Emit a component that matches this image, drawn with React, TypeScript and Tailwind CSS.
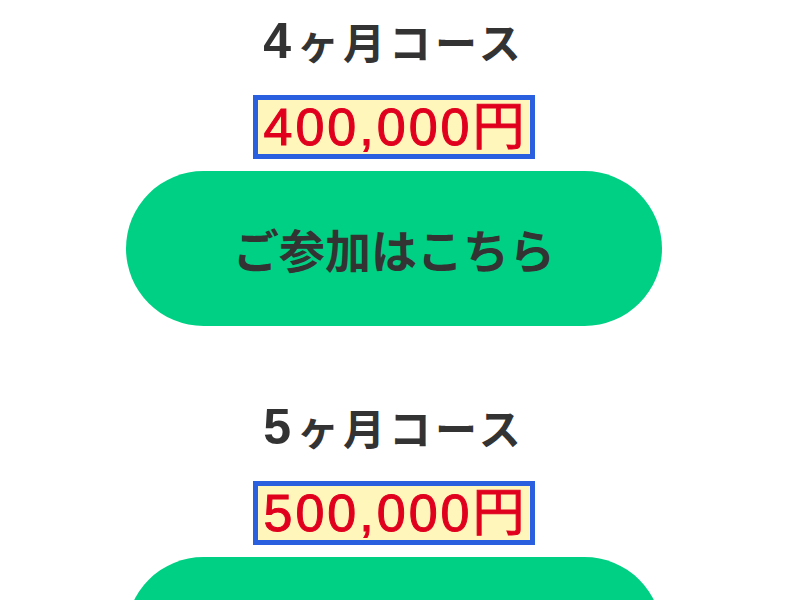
const jp = '"Noto Sans CJK JP", "Noto Sans", sans-serif';
const latin = '"Liberation Sans", "Noto Sans CJK JP", Arial, sans-serif';

type Course = { months: string; price: string };

const courses: Course[] = [
  { months: "4", price: "400,000円" },
  { months: "5", price: "500,000円" },
];

function CourseBlock({ course }: { course: Course }) {
  return (
    <section className="flex flex-col items-center">
      <h2 className="flex h-[60px] items-center text-[42px] leading-[60px] font-bold tracking-[4px] text-[#333333]">
        <span style={{ fontFamily: latin }} className="mr-[2px] text-[50px]">
          {course.months}
        </span>
        <span>ヶ月コース</span>
      </h2>
      <div className="mt-[24px] flex h-[64px] w-[282px] items-center justify-center border-[5px] border-[#2a5fe0] bg-[#fff6bc]">
        <span
          style={{ fontFamily: latin, WebkitTextStroke: "1px #e0001e" }}
          className="pl-[3px] text-[52px] leading-none font-normal tracking-[3px] text-[#e0001e]"
        >
          {course.price}
        </span>
      </div>
      <a
        href="#"
        className="mt-[12px] flex h-[155px] w-[536px] items-center justify-center rounded-full bg-[#00d084] text-[46px] font-bold text-[#333333] no-underline"
      >
        ご参加はこちら
      </a>
    </section>
  );
}

export default function App() {
  return (
    <main style={{ fontFamily: jp }} className="min-h-screen w-full overflow-hidden bg-white pt-[11px]">
      <div className="flex flex-col items-center gap-[71px]">
        {courses.map((c) => (
          <CourseBlock key={c.months} course={c} />
        ))}
      </div>
    </main>
  );
}
